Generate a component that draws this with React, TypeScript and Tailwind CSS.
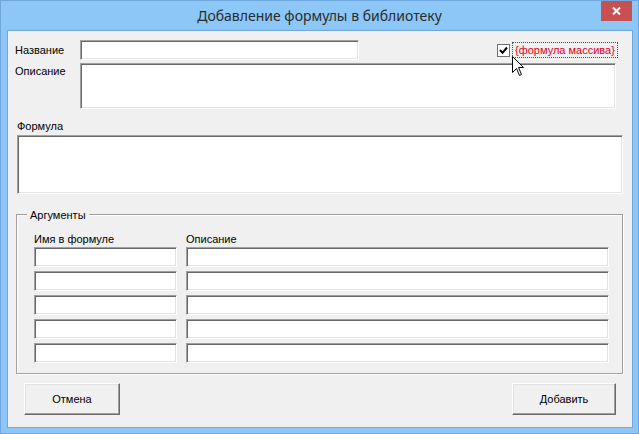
import React from "react";

const sunken =
  "bg-white border border-t-[#a0a0a0] border-l-[#a0a0a0] border-r-white border-b-white shadow-[inset_1px_1px_0_#696969,inset_-1px_-1px_0_#e3e3e3]";
const raised =
  "bg-[#f0f0f0] border border-t-white border-l-white border-r-[#696969] border-b-[#696969] shadow-[inset_-1px_-1px_0_#a0a0a0,inset_1px_1px_0_#e3e3e3] flex items-center justify-center";

function Cursor() {
  return (
    <svg
      className="absolute left-[511px] top-[55px]"
      width="13"
      height="21"
      viewBox="0 0 13 21"
    >
      <path
        d="M0.5 0.5 L0.5 16.5 L4.5 12.5 L7.5 19.5 L9.5 18.5 L6.5 11.5 L11.5 11.5 Z"
        fill="white"
        stroke="black"
        strokeWidth="1"
        strokeLinejoin="miter"
      />
    </svg>
  );
}

export default function App() {
  const rows = [0, 1, 2, 3, 4];
  return (
    <div className="relative w-[639px] h-[434px] bg-[#8cc7f8] border border-[#6fa6dc] flex flex-col text-[11px] leading-[14px] text-black font-['Liberation_Sans',Arial,sans-serif]">
      {/* Title bar */}
      <div className="h-[29px] grid grid-cols-[1fr_auto_1fr]">
        <div />
        <div className="self-center font-['Noto_Sans',sans-serif] text-[14px] leading-[20px] text-[#2b2b2b]">
          Добавление формулы в библиотеку
        </div>
        <div className="flex justify-end items-start pr-[6px]">
          <div className="w-[31px] h-[20px] bg-[#c75050] flex items-center justify-center">
            <svg width="9" height="8" viewBox="0 0 9 8">
              <path d="M1 0.5 L8 7.5 M8 0.5 L1 7.5" stroke="white" strokeWidth="2" />
            </svg>
          </div>
        </div>
      </div>

      {/* Client area */}
      <div className="ml-[6px] w-[626px] h-[398px] border border-[#6fa6dc] bg-[#f0f0f0] flex flex-col">
        {/* Row 1 */}
        <div className="flex mt-[9px] h-[20px]">
          <div className="w-[72px] pl-[7px] flex items-center">Название</div>
          <div className={`w-[279px] h-[20px] ${sunken}`} />
          <div className="ml-[138px] flex items-center h-[20px]">
            <div className="w-[13px] h-[13px] bg-white border border-[#707070] flex items-center justify-center">
              <svg width="9" height="9" viewBox="0 0 9 9">
                <path d="M1 4 L3.5 6.8 L8 1.5" stroke="black" strokeWidth="2" fill="none" />
              </svg>
            </div>
            <div className="ml-[2px] h-[16px] px-[2px] flex items-center border border-dotted border-[#1f5f6f] text-[#e0001c]">
              {"{формула массива}"}
            </div>
          </div>
        </div>

        {/* Row 2 */}
        <div className="flex mt-[3px]">
          <div className="w-[72px] pl-[7px] pt-[1px]">Описание</div>
          <div className={`w-[536px] h-[46px] ${sunken}`} />
        </div>

        {/* Formula */}
        <div className="mt-[10px] ml-[9px] h-[14px]">Формула</div>
        <div className={`mt-[2px] ml-[9px] w-[606px] h-[59px] ${sunken}`} />

        {/* Arguments group */}
        <div className="relative mt-[20px] ml-[8px] w-[607px] h-[160px] border border-[#a0a0a0] shadow-[1px_1px_0_white,inset_1px_1px_0_white]">
          <div className="absolute left-[10px] -top-[7px] px-[3px] bg-[#f0f0f0] leading-[14px]">
            Аргументы
          </div>
          <div className="pt-[17px] pl-[17px] flex flex-col">
            <div className="grid grid-cols-[143px_423px] gap-x-[9px] h-[14px] mb-[1px]">
              <div>Имя в формуле</div>
              <div>Описание</div>
            </div>
            <div className="grid grid-cols-[143px_423px] gap-x-[9px] gap-y-[4px]">
              {rows.map((r) => (
                <React.Fragment key={r}>
                  <div className={`h-[20px] ${sunken}`} />
                  <div className={`h-[20px] ${sunken}`} />
                </React.Fragment>
              ))}
            </div>
          </div>
        </div>

        {/* Buttons */}
        <div className="mt-[9px] flex justify-between px-[16px]">
          <div className={`w-[96px] h-[32px] ${raised}`}>Отмена</div>
          <div className={`w-[104px] h-[32px] ${raised}`}>Добавить</div>
        </div>
      </div>

      <Cursor />
    </div>
  );
}
